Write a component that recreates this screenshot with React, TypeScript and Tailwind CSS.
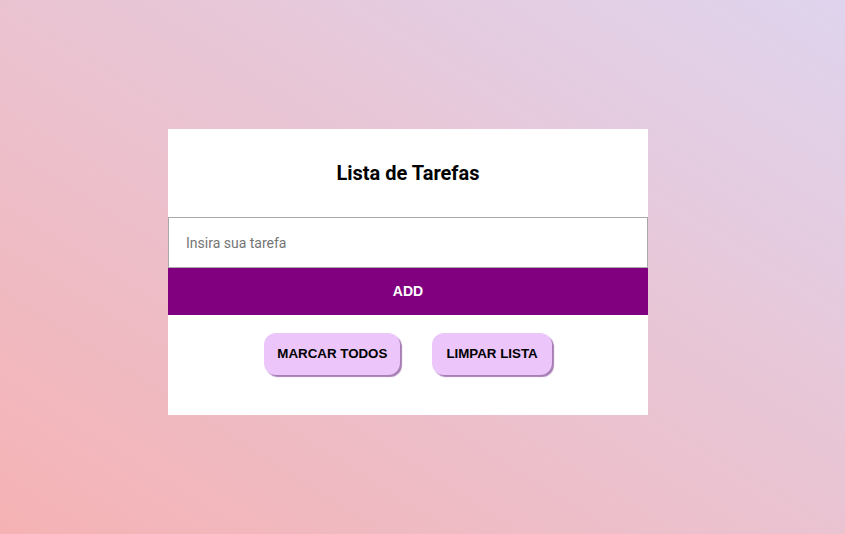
export default function App() {
  return (
    <div className="min-h-screen w-full flex items-center justify-center bg-[linear-gradient(to_right_top,#f5b2b4,#dfd4ee)]">
      <div className="w-[480px] bg-white flex flex-col mr-[29px] mt-[10px]">
        <div className="h-[88px] flex items-center justify-center">
          <h1 className="text-[20px] font-bold text-black font-['Roboto',sans-serif]">
            Lista de Tarefas
          </h1>
        </div>

        <input
          type="text"
          placeholder="Insira sua tarefa"
          className="h-[51px] w-full border border-[#a9a9a9] px-[17px] text-[14px] font-['Roboto',sans-serif] outline-none placeholder:text-[#757575]"
        />

        <button className="h-[47px] w-full bg-[#800080] text-white text-[14px] font-bold font-['Liberation_Sans',Arial,sans-serif]">
          ADD
        </button>

        <div className="h-[100px] flex justify-center items-start pt-[18px] gap-[32px]">
          <button className="h-[42px] px-[13px] rounded-[12px] bg-[#ecc5fb] text-black text-[13.33px] font-bold font-['Liberation_Sans',Arial,sans-serif] shadow-[2px_2px_1px_#a67fb5]">
            MARCAR TODOS
          </button>
          <button className="h-[42px] px-[14px] rounded-[12px] bg-[#ecc5fb] text-black text-[13.33px] font-bold font-['Liberation_Sans',Arial,sans-serif] shadow-[2px_2px_1px_#a67fb5]">
            LIMPAR LISTA
          </button>
        </div>
      </div>
    </div>
  )
}
